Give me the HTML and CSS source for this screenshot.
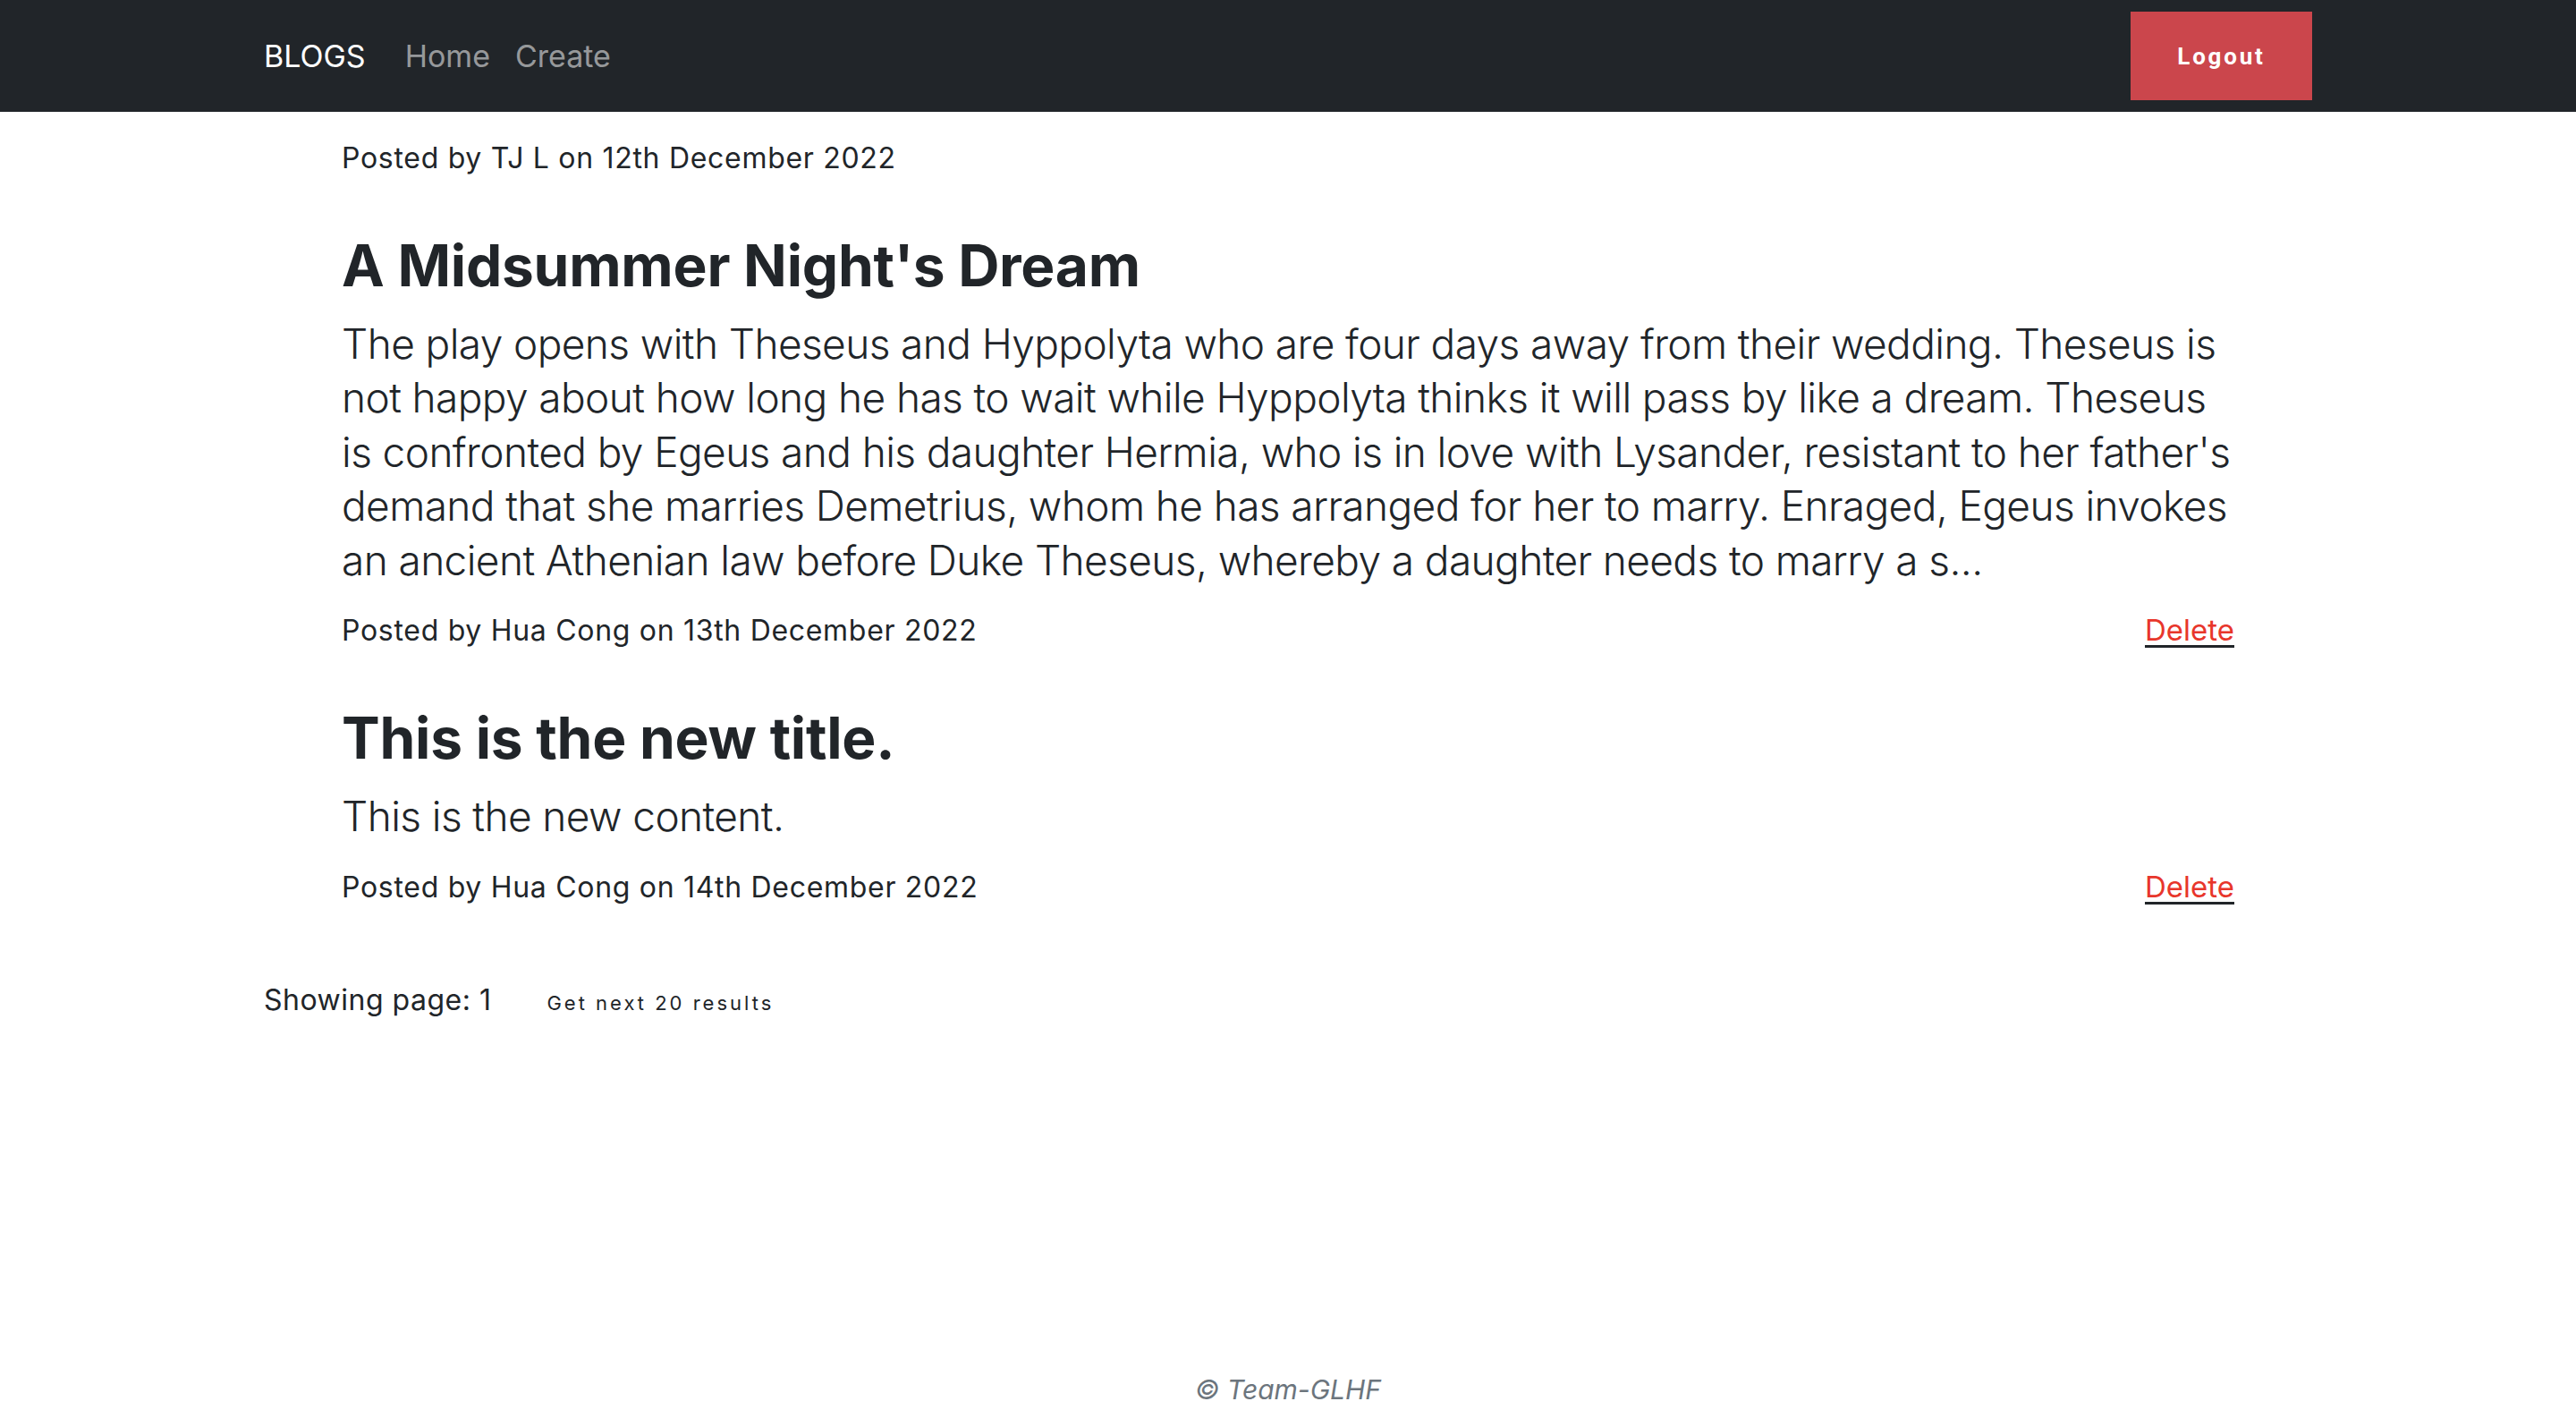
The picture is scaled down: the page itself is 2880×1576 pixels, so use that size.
FILE: index.html
```html
<!DOCTYPE html>
<html lang="en">
<head>
<meta charset="utf-8">
<title>Blogs</title>
<link rel="stylesheet" href="styles.css">
</head>
<body>
<nav class="navbar">
  <div class="container nav-inner">
    <a class="brand" href="#">BLOGS</a>
    <a class="nav-link" href="#">Home</a>
    <a class="nav-link" href="#">Create</a>
    <button class="logout" type="button">Logout</button>
  </div>
</nav>
<main class="container main">
  <section class="posts">
    <article class="post">
      <div class="meta-row">
        <span class="meta">Posted by TJ L on 12th December 2022</span>
      </div>
    </article>
    <article class="post">
      <h2 class="post-title">A Midsummer Night's Dream</h2>
      <p class="post-content">The play opens with Theseus and Hyppolyta who are four days away from their wedding. Theseus is not happy about how long he has to wait while Hyppolyta thinks it will pass by like a dream. Theseus is confronted by Egeus and his daughter Hermia, who is in love with Lysander, resistant to her father's demand that she marries Demetrius, whom he has arranged for her to marry. Enraged, Egeus invokes an ancient Athenian law before Duke Theseus, whereby a daughter needs to marry a s...</p>
      <div class="meta-row">
        <span class="meta">Posted by Hua Cong on 13th December 2022</span>
        <a class="delete" href="#">Delete</a>
      </div>
    </article>
    <article class="post">
      <h2 class="post-title">This is the new title.</h2>
      <p class="post-content">This is the new content.</p>
      <div class="meta-row">
        <span class="meta">Posted by Hua Cong on 14th December 2022</span>
        <a class="delete" href="#">Delete</a>
      </div>
    </article>
  </section>
  <div class="pager">
    <span class="page-label">Showing page: 1</span>
    <button class="next-btn" type="button">Get next 20 results</button>
  </div>
</main>
<footer class="footer">© Team-GLHF</footer>
</body>
</html>
```

FILE: styles.css
```css
* { box-sizing: border-box; }
html, body { margin: 0; padding: 0; }
body {
  min-height: 100vh;
  display: flex;
  flex-direction: column;
  font-family: Inter, "Noto Sans", sans-serif;
  color: #212529;
  background: #fff;
}
.container {
  width: 2290px;
  margin: 0 auto;
}
.navbar {
  background: #212529;
  height: 125px;
}
.nav-inner {
  height: 100%;
  display: flex;
  align-items: center;
}
.brand {
  color: #fff;
  text-decoration: none;
  font-size: 34px;
  margin-right: 30px;
}
.nav-link {
  color: rgba(255,255,255,0.55);
  text-decoration: none;
  font-size: 34px;
  padding: 0 14px;
}
.logout {
  margin-left: auto;
  width: 203px;
  height: 99px;
  border: 0;
  border-radius: 0;
  background: #cb464c;
  color: #fff;
  font-family: Roboto, "Liberation Sans", sans-serif;
  font-weight: 700;
  font-size: 26px;
  letter-spacing: 2.8px;
  padding: 0;
}
.main {
  padding-top: 28px;
}
.posts {
  padding: 0 87px;
}
.post-title {
  margin: 0 0 18px;
  font-size: 64px;
  font-weight: 700;
  line-height: 76.8px;
  letter-spacing: -0.25px;
}
.post-content {
  margin: 0 0 24px;
  font-size: 46px;
  font-weight: 300;
  line-height: 60.5px;
  letter-spacing: -0.6px;
}
.meta-row {
  display: flex;
  justify-content: space-between;
  align-items: baseline;
  line-height: 48px;
  margin-bottom: 58px;
}
.meta {
  font-size: 32px;
  letter-spacing: 0.7px;
}
.delete {
  font-size: 33px;
  color: #e8362b;
  text-decoration: underline;
  text-decoration-color: #212529;
  text-decoration-thickness: 3px;
  text-underline-offset: 5px;
}
.post:last-child .meta-row { margin-bottom: 0; }
.pager {
  margin-top: 78px;
  display: flex;
  align-items: baseline;
  line-height: 48px;
}
.page-label {
  font-size: 32px;
  letter-spacing: 0.5px;
}
.next-btn {
  margin-left: 62px;
  border: 0;
  background: transparent;
  padding: 0;
  font-family: Inter, "Noto Sans", sans-serif;
  font-size: 22px;
  font-weight: 400;
  letter-spacing: 3px;
  color: #212529;
}
.footer {
  margin-top: auto;
  text-align: center;
  font-size: 30px;
  line-height: 45px;
  font-style: italic;
  color: #6c757d;
}
```
